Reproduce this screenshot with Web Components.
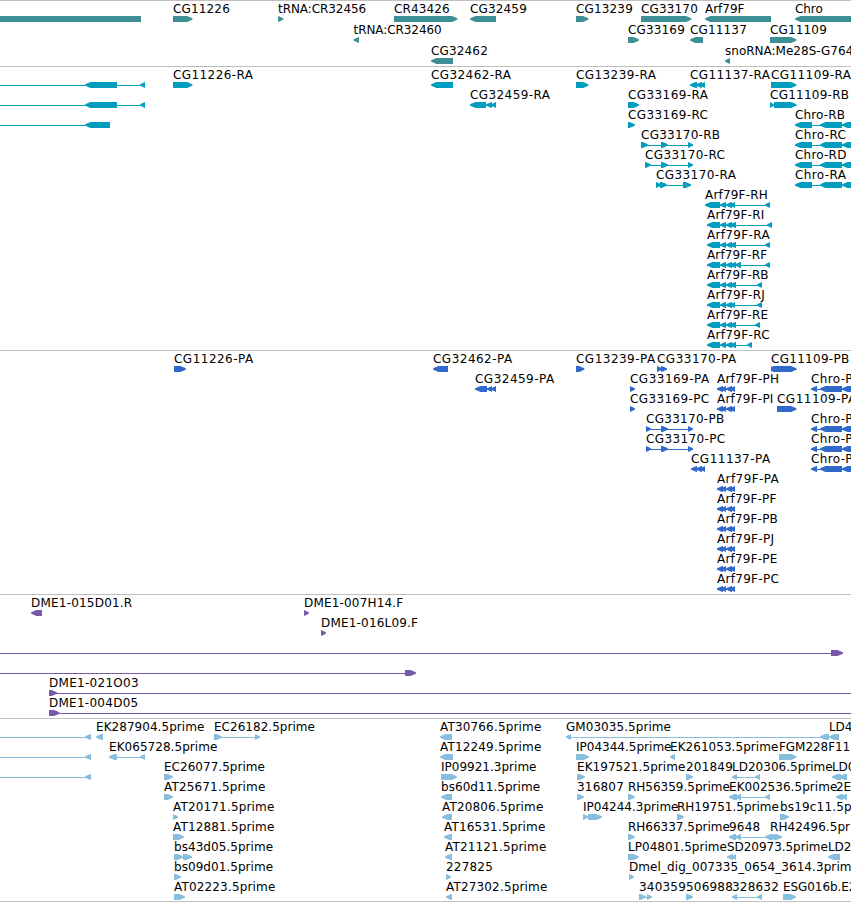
<!DOCTYPE html>
<html lang="en">
<head>
<meta charset="utf-8">
<title>Genome browser</title>
<style>
body {
    margin: 0;
    overflow: hidden;
    background: #fff;
}
</style>
</head>
<body>
<genome-browser>
<genome-track color="#3d8f94" height="66" pitch="21">
0 - < -20:141
0 CG11226 > 173:192.5
0 tRNA:CR32456 > 278:283.5
0 CR43426 > 394:457.5
0 CG32459 < 470:496
0 CG13239 > 576:588.5
0 CG33170 > 641:691.5
0 Arf79F < 705:771
0 Chro < 795:880
1 tRNA:CR32460 < 353.5:359
1 CG33169 > 628:639
1 CG11137 < 690:703
1 CG11109 > 770:796.5
2 CG32462 < 431:453
2 snoRNA:Me28S-G764 < 725:730
</genome-track>
<genome-track color="#009dbf" height="284">
0 - < -20:-10 85:117 140:145
1 - < -20:-10 85:117 140:145
2 - < -20:-10 85:110
0 CG11226-RA > 173:192.5
0 CG32462-RA < 431:453
0 CG13239-RA > 576:588.5
0 CG11137-RA < 690:697 696:702 700:705
0 CG11109-RA > 771:796.5
1 CG32459-RA < 470:486 486:492 491:496
1 CG33169-RA > 628:639
1 CG11109-RB > 770:774 774:796.5
2 CG33169-RC > 628:635
2 Chro-RB < 795:812 820:842 842:870
3 CG33170-RB > 641:648 661:668 688:693
3 Chro-RC < 795:812 820:842 842:870
4 CG33170-RC > 645:651 661:668 688:693
4 Chro-RD < 795:812 820:842 842:870
5 CG33170-RA > 656:661 660:667 683:691
5 Chro-RA < 795:812 820:842 842:870
6 Arf79F-RH < 705:720 720:726 726:732 730:735 765:770
7 Arf79F-RI < 707:720 720:726 726:732 730:736 767:772
8 Arf79F-RA < 707:720 720:726 726:732 730:736 765:770
9 Arf79F-RF < 707:720 720:726 726:732 730:736 735:741 765:770
10 Arf79F-RB < 707:720 720:726 726:732 730:736 757:762
11 Arf79F-RJ < 707:720 720:726 726:732 730:735 757:762
12 Arf79F-RE < 707:720 720:726 726:732 730:736 755:760
13 Arf79F-RC < 707:720 720:726 726:732 730:736 747:752
</genome-track>
<genome-track color="#3069cb" height="244">
0 CG11226-PA > 174:186
0 CG32462-PA < 433:448
0 CG13239-PA > 576:584.5
0 CG33170-PA > 657:662 661:667
0 CG11109-PB > 771:775 773:796.5
1 CG32459-PA < 475:487 487:492 491:496
1 CG33169-PA > 630:635
1 Arf79F-PH < 717:723 721:726 726:732 730:735
1 Chro-P < 811:817 820:842 842:870
2 CG33169-PC > 630:635
2 Arf79F-PI < 717:723 721:726 726:732 730:735
2 CG11109-PA > 777:796.5
3 CG33170-PB > 646:651 661:668 688:693
3 Chro-P < 811:817 820:842 842:870
4 CG33170-PC > 646:651 661:668 688:693
4 Chro-P < 811:817 820:842 842:870
5 CG11137-PA < 691:697 696:702 700:705
5 Chro-P < 811:817 820:842 842:870
6 Arf79F-PA < 717:723 721:726 726:732 730:735
7 Arf79F-PF < 717:723 721:726 726:732 730:735
8 Arf79F-PB < 717:723 721:726 726:732 730:735
9 Arf79F-PJ < 717:723 721:726 726:732 730:735
10 Arf79F-PE < 717:723 721:726 726:732 730:735
11 Arf79F-PC < 717:723 721:726 726:732 730:735
</genome-track>
<genome-track color="#7759a7" height="124">
0 DME1-015D01.R < 31:42
0 DME1-007H14.F > 304:309
1 DME1-016L09.F > 321:326
2 - > -20:-10 831:843
3 - > -20:-10 405:416
4 DME1-021O03 > 49:57 870:880
5 DME1-004D05 > 49:59.5 870:880
</genome-track>
<genome-track color="#87bddd" height="183">
0 - < -20:-10 85:91
0 EK287904.5prime < 96:103
0 EC26182.5prime > 214:222 255:260
0 AT30766.5prime < 440:452
0 GM03035.5prime < 566:571 820:829
0 LD4 < 829:839
1 - < -20:-10 85:91
1 EK065728.5prime < 109:117 140:145
1 AT12249.5prime < 440:453
1 IP04344.5prime > 576:589
1 EK261053.5prime < 670:675
1 FGM228F11 > 779:796.5
2 - < -20:-10 85:91
2 EC26077.5prime > 164:173
2 IP09921.3prime > 441:457
2 EK197521.5prime > 577:585
2 201849 > 686:693
2 LD20306.5prime < 732:737 755:760
2 LD0 < 832:841 839:847
3 AT25671.5prime > 164:173
3 bs60d11.5prime < 441:452
3 316807 > 577:584
3 RH56359.5prime > 628:635
3 EK002536.5prime < 729:737 735:741 765:770
3 2E < 836:843 841:847
4 AT20171.5prime > 173:178
4 AT20806.5prime < 442:452
4 IP04244.3prime > 583:588.5 588:602
4 RH19751.5prime > 677:684
4 bs19c11.5p > 780:789
5 AT12881.5prime > 173:184
5 AT16531.5prime < 444:452
5 RH66337.5prime > 628:635
5 9648 < 729:736 735:741 765:773
5 RH42496.5pr > 770:777 774:782
6 bs43d05.5prime > 174:183 183:192
6 AT21121.5prime < 445:452
6 LP04801.5prime > 628:639
6 SD20973.5prime < 727:733 732:736
6 LD2 < 828:840
7 bs09d01.5prime > 174:181
7 227825 > 446:451
7 Dmel_dig_007335_0654_3614.3prim > 629:634
8 AT02223.5prime > 174:185
8 AT27302.5prime < 446:452
8 340359 > 639:646 647:652
8 506988 > 686:693
8 328632 < 732:737 757:762
8 ESG016b.E2 > 783:796
</genome-track>
</genome-browser>

<script>
const browserTemplate = document.createElement('template');
browserTemplate.innerHTML = `
<style>
:host {
    display: flex;
    flex-direction: column;
    width: 851px;
    height: 902px;
    overflow: hidden;
    box-sizing: border-box;
    border-bottom: 1px solid #c0c0c0;
    font-family: 'DejaVu Sans', sans-serif;
    font-size: 12px;
    color: #000;
}
</style>
<slot></slot>`;

const trackTemplate = document.createElement('template');
trackTemplate.innerHTML = `
<style>
:host {
    display: block;
    flex: 0 0 auto;
    box-sizing: border-box;
    border-top: 1px solid #c0c0c0;
    overflow: hidden;
}
svg {
    display: block;
    width: 851px;
    height: 100%;
}
text {
    fill: #000;
    white-space: pre;
}
</style>
<svg></svg>`;

const SVG = 'http://www.w3.org/2000/svg';

// label advances in px, digits and unlisted letters use 7.8
const ADVANCE = {
    A: 8.6, B: 7.6, C: 8.6, D: 9, E: 7.2, F: 6.2, G: 9.2, H: 8.8, I: 3.2, J: 3.8,
    K: 8.2, L: 6.6, M: 10.6, N: 8.6, O: 9.4, P: 7.2, R: 8, S: 6.8, T: 7.6,
    c: 6.8, e: 7.5, f: 4.4, g: 7.8, h: 7.4, i: 3.4, l: 3.4, m: 11, n: 7.2,
    o: 7.2, p: 7.8, r: 4.6, s: 6.2, t: 4.6, '-': 6.6, '.': 4, ':': 2.8, _: 6.2
};

function labelWidth(label) {
    return [...label].reduce((sum, c) => sum + (ADVANCE[c] || 7.8), 0);
}

function make(name, attrs) {
    const node = document.createElementNS(SVG, name);
    for (const key in attrs) node.setAttribute(key, attrs[key]);
    return node;
}

// exon box with a rounded 5px point at the end it is read towards
function exonPath(a, b, y, dir) {
    const [flat, tip, sign] = dir === '>' ? [a, b, -1] : [b, a, 1];
    const reach = Math.min(5.5, b - a);
    const s = tip + sign * reach;
    const m = tip + sign * reach * 0.45;
    return `M${flat} ${y}H${s}L${m} ${y + 1.2}L${tip} ${y + 2.6}V${y + 3.4}L${m} ${y + 4.8}L${s} ${y + 6}H${flat}Z`;
}

class GenomeBrowser extends HTMLElement {
    constructor() {
        super();
        this.attachShadow({ mode: 'open' });
        this.shadowRoot.appendChild(browserTemplate.content.cloneNode(true));
    }
}

class GenomeTrack extends HTMLElement {
    constructor() {
        super();
        this.attachShadow({ mode: 'open' });
        this.shadowRoot.appendChild(trackTemplate.content.cloneNode(true));
    }

    connectedCallback() {
        const svg = this.shadowRoot.querySelector('svg');
        const color = this.getAttribute('color');
        const pitch = Number(this.getAttribute('pitch') || 20);
        this.style.height = this.getAttribute('height') + 'px';
        svg.replaceChildren();

        this.textContent.trim().split('\n').forEach(line => {
            const [row, label, dir, ...rest] = line.trim().split(' ');
            const exons = rest.map(e => e.split(':').map(Number));
            const top = row * pitch;
            const start = exons[0][0];
            const end = exons[exons.length - 1][1];

            if (exons.length > 1) {
                svg.appendChild(make('rect', {
                    x: start, y: top + 18, width: end - start, height: 1, fill: color
                }));
            }
            exons.forEach(([a, b]) => {
                svg.appendChild(make('path', { d: exonPath(a, b, top + 15, dir), fill: color }));
            });
            if (label !== '-') {
                const text = make('text', { x: start, y: top + 12, textLength: labelWidth(label).toFixed(1) });
                text.textContent = label;
                svg.appendChild(text);
            }
        });
    }
}

window.customElements.define('genome-browser', GenomeBrowser);
window.customElements.define('genome-track', GenomeTrack);
</script>
</body>
</html>
